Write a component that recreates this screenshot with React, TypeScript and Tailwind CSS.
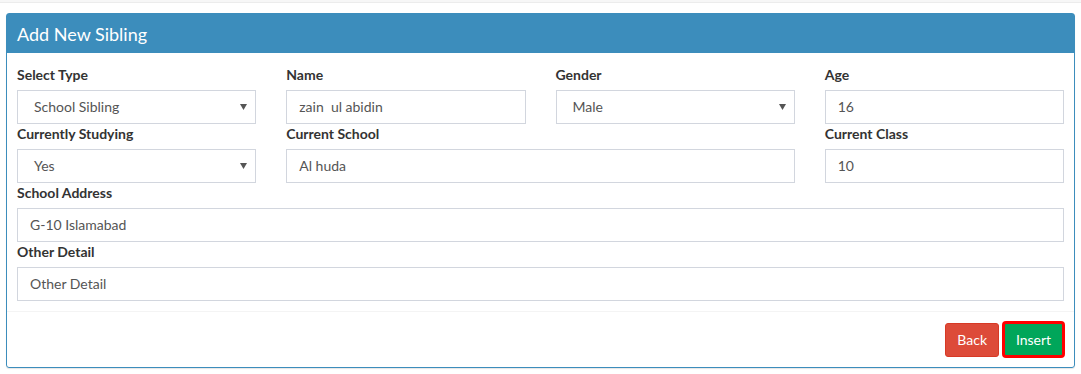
import React from 'react';

const font = { fontFamily: 'Lato, "Open Sans", "Liberation Sans", sans-serif' };

function Label({ children }: { children: React.ReactNode }) {
  return <label className="block h-5 mb-[5px] text-[14px] leading-5 font-bold text-[#333]">{children}</label>;
}

function TextInput({ value }: { value: string }) {
  return (
    <div className="h-[34px] border border-[#d2d6de] px-[12px] pb-px flex items-center text-[14px] text-[#555] whitespace-pre">
      {value}
    </div>
  );
}

function SelectInput({ value }: { value: string }) {
  return (
    <div className="h-[34px] border border-[#d2d6de] pl-[16px] pr-[8px] pb-px flex items-center justify-between text-[14px] text-[#555]">
      <span>{value}</span>
      <svg width="7" height="6" viewBox="0 0 7 6" className="fill-[#555]">
        <path d="M0 0 H7 L3.5 6 Z" />
      </svg>
    </div>
  );
}

function Field({ label, children, className }: { label: string; children: React.ReactNode; className?: string }) {
  return (
    <div className={className}>
      <Label>{label}</Label>
      {children}
    </div>
  );
}

export default function App() {
  return (
    <div className="w-[1081px] h-[374px] bg-white" style={font}>
      <div className="h-[3px] bg-[#f7f7f7] border-b border-[#ececec]" />
      <div className="mx-[6px] mt-[10px] border border-[#3c8dbc] rounded-[3px] shadow-[0_1px_1px_rgba(0,0,0,0.1)]">
        <div className="h-[39px] bg-[#3c8dbc] px-[10px] flex items-center">
          <h3 className="text-[18px] text-white leading-none">Add New Sibling</h3>
        </div>
        <div className="px-[10px] pt-[12px] pb-[10px]">
          <div className="grid grid-cols-4 gap-x-[30px]">
            <Field label="Select Type"><SelectInput value="School Sibling" /></Field>
            <Field label="Name"><TextInput value="zain  ul abidin" /></Field>
            <Field label="Gender"><SelectInput value="Male" /></Field>
            <Field label="Age"><TextInput value="16" /></Field>
            <Field label="Currently Studying"><SelectInput value="Yes" /></Field>
            <Field label="Current School" className="col-span-2"><TextInput value="Al huda" /></Field>
            <Field label="Current Class"><TextInput value="10" /></Field>
            <Field label="School Address" className="col-span-4"><TextInput value="G-10 Islamabad" /></Field>
            <Field label="Other Detail" className="col-span-4"><TextInput value="Other Detail" /></Field>
          </div>
        </div>
        <div className="border-t border-[#f4f4f4] px-[10px] py-[9px] flex justify-end items-center">
          <button className="h-[34px] px-[11px] bg-[#dd4b39] border border-[#d73925] rounded-[3px] text-white text-[14px] mr-[3px]">
            Back
          </button>
          <button className="h-[37px] w-[63px] -mr-px bg-[#00a65a] border-[3px] border-[#ff0000] rounded-[4px] text-white text-[14px]">
            Insert
          </button>
        </div>
      </div>
    </div>
  );
}
